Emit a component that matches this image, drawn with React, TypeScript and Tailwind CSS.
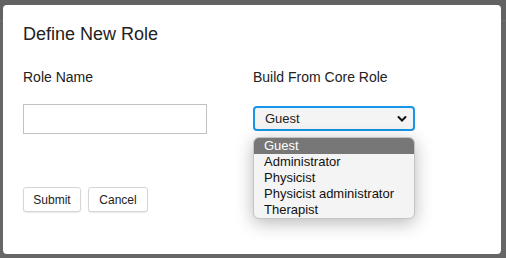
import React from 'react';

const roles = ['Guest', 'Administrator', 'Physicist', 'Physicist administrator', 'Therapist'];

const font = { fontFamily: '"Liberation Sans", Arial, sans-serif' };

export default function App() {
  return (
    <div className="relative h-[258px] w-[506px] overflow-hidden bg-[#666666]" style={font}>
      <div className="h-[21px] border-b border-[#707070] bg-[#626262]" />

      <div className="absolute left-[3px] top-[5px] h-[249px] w-[498px] rounded-[4px] bg-white pl-[20px] pt-[19px] text-[#222]">
        <h2 className="text-[18px] leading-[21px]">Define New Role</h2>

        <div className="mt-[24px] grid grid-cols-[230px_1fr]">
          <div>
            <div className="text-[14px] leading-[16px]">Role Name</div>
            <input
              type="text"
              className="mt-[19px] block h-[30px] w-[184px] border border-[#c2c2c2] bg-white px-2 text-[13px] outline-none"
            />
          </div>

          <div className="relative">
            <div className="text-[14px] leading-[16px]">Build From Core Role</div>
            <div className="mt-[21px] flex h-[25px] w-[162px] items-center justify-between rounded-[4px] border-2 border-[#1795e6] bg-[#f4f4f4] pl-[10px] pr-[5px] text-[13px]">
              <span>Guest</span>
              <svg width="10" height="8" viewBox="0 0 10 8" className="mr-[1px]">
                <path d="M1.5 2 L5 5.5 L8.5 2" fill="none" stroke="#111" strokeWidth="2" strokeLinecap="round" />
              </svg>
            </div>

            {/* open dropdown list */}
            <div className="absolute left-0 top-[68px] w-[162px] overflow-hidden rounded-[6px] border border-[#c4c4c4] bg-[#f4f4f4] shadow-[0_4px_18px_rgba(0,0,0,0.28)]">
              {roles.map((r, i) => (
                <div
                  key={r}
                  className={
                    i === 0
                      ? 'h-[16px] bg-[#777777] pl-[10px] text-[13px] leading-[16px] text-white'
                      : 'h-[16px] pl-[10px] text-[13px] leading-[16px] text-[#111]'
                  }
                >
                  {r}
                </div>
              ))}
            </div>
          </div>
        </div>

        <div className="mt-[53px] flex gap-[7px]">
          <button className="h-[25px] w-[58px] rounded-[3px] border border-[#d6d6d6] bg-white text-[12px] text-[#222] shadow-[0_1px_1px_rgba(0,0,0,0.08)]">
            Submit
          </button>
          <button className="h-[25px] w-[60px] rounded-[3px] border border-[#d6d6d6] bg-white text-[12px] text-[#222] shadow-[0_1px_1px_rgba(0,0,0,0.08)]">
            Cancel
          </button>
        </div>
      </div>
    </div>
  );
}
